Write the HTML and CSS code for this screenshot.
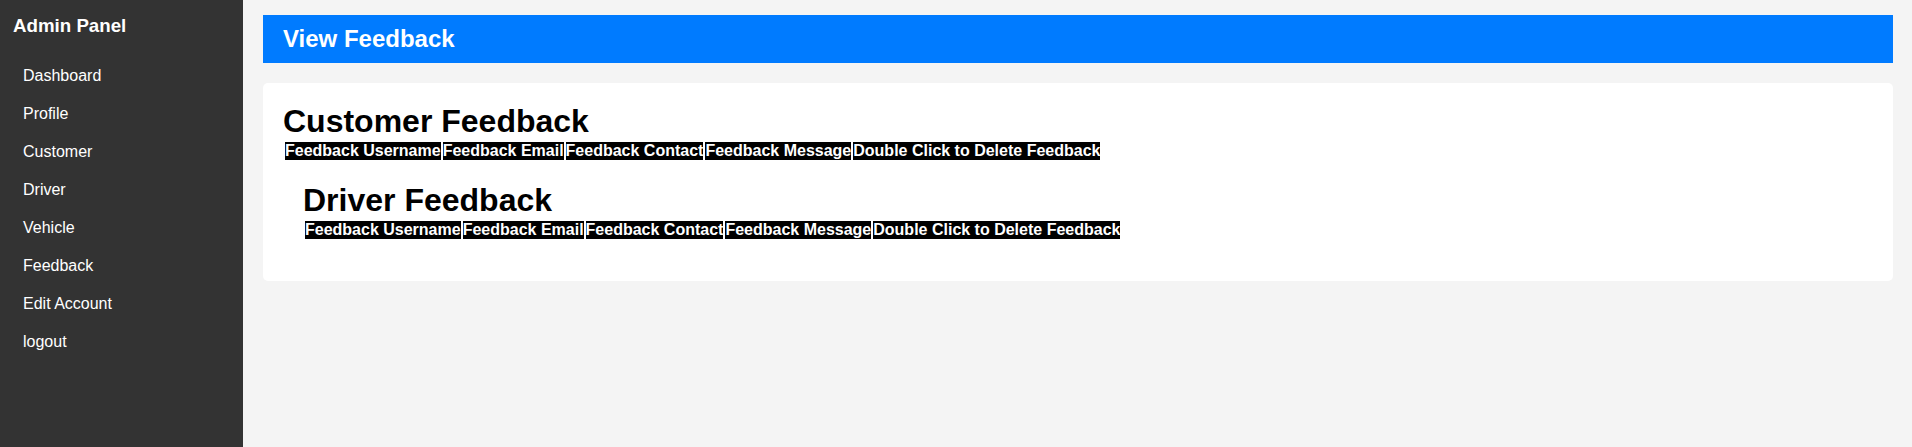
FILE: index.html
```html
<!DOCTYPE html>
<html lang="en">
<head>
<meta charset="utf-8">
<title>View Feedback</title>
<link rel="stylesheet" href="styles.css">
</head>
<body>
<div class="layout">
  <aside class="sidebar">
    <h3 class="brand">Admin Panel</h3>
    <ul class="nav">
      <li><a href="#">Dashboard</a></li>
      <li><a href="#">Profile</a></li>
      <li><a href="#">Customer</a></li>
      <li><a href="#">Driver</a></li>
      <li><a href="#">Vehicle</a></li>
      <li><a href="#">Feedback</a></li>
      <li><a href="#">Edit Account</a></li>
      <li><a href="#">logout</a></li>
    </ul>
  </aside>
  <main class="main">
    <header class="topbar">
      <h2 class="topbar-title">View Feedback</h2>
    </header>
    <section class="card">
      <h1 class="section-title">Customer Feedback</h1>
      <table class="feedback-table">
        <thead>
          <tr>
            <th>Feedback Username</th>
            <th>Feedback Email</th>
            <th>Feedback Contact</th>
            <th>Feedback Message</th>
            <th>Double Click to Delete Feedback</th>
          </tr>
        </thead>
      </table>
      <div class="card-inner">
        <h1 class="section-title">Driver Feedback</h1>
        <table class="feedback-table">
          <thead>
            <tr>
              <th>Feedback Username</th>
              <th>Feedback Email</th>
              <th>Feedback Contact</th>
              <th>Feedback Message</th>
              <th>Double Click to Delete Feedback</th>
            </tr>
          </thead>
        </table>
      </div>
    </section>
  </main>
</div>
</body>
</html>
```

FILE: styles.css
```css
html, body {
  margin: 0;
  padding: 0;
  height: 100%;
}

body {
  font-family: "Liberation Sans", Arial, Helvetica, sans-serif;
  background: #f4f4f4;
  color: #000;
}

.layout {
  display: flex;
  min-height: 100vh;
}

.sidebar {
  width: 243px;
  flex: 0 0 243px;
  box-sizing: border-box;
  background: #333333;
  color: #fff;
  padding: 15px 13px;
}

.brand {
  margin: 0 0 20px;
  font-size: 18.72px;
  font-weight: bold;
  color: #fff;
}

.nav {
  list-style: none;
  margin: 0;
  padding: 0;
}

.nav li a {
  display: block;
  padding: 10px 10px;
  font-size: 16px;
  color: #fff;
  text-decoration: none;
}

.main {
  flex: 1;
  min-width: 0;
  padding: 15px 19px 20px 20px;
}

.topbar {
  background: #007bff;
  color: #fff;
  padding: 10px 20px;
}

.topbar-title {
  margin: 0;
  font-size: 24px;
  font-weight: bold;
}

.card {
  margin-top: 20px;
  background: #fff;
  border-radius: 5px;
  padding: 20px;
}

.card-inner {
  background: #fff;
  padding: 20px;
}

.section-title {
  margin: 0;
  font-size: 32px;
  font-weight: bold;
}

.feedback-table {
  border-spacing: 2px;
}

.feedback-table th {
  background: #000;
  color: #fff;
  padding: 0;
  font-size: 16px;
  font-weight: bold;
  text-align: left;
}
```
